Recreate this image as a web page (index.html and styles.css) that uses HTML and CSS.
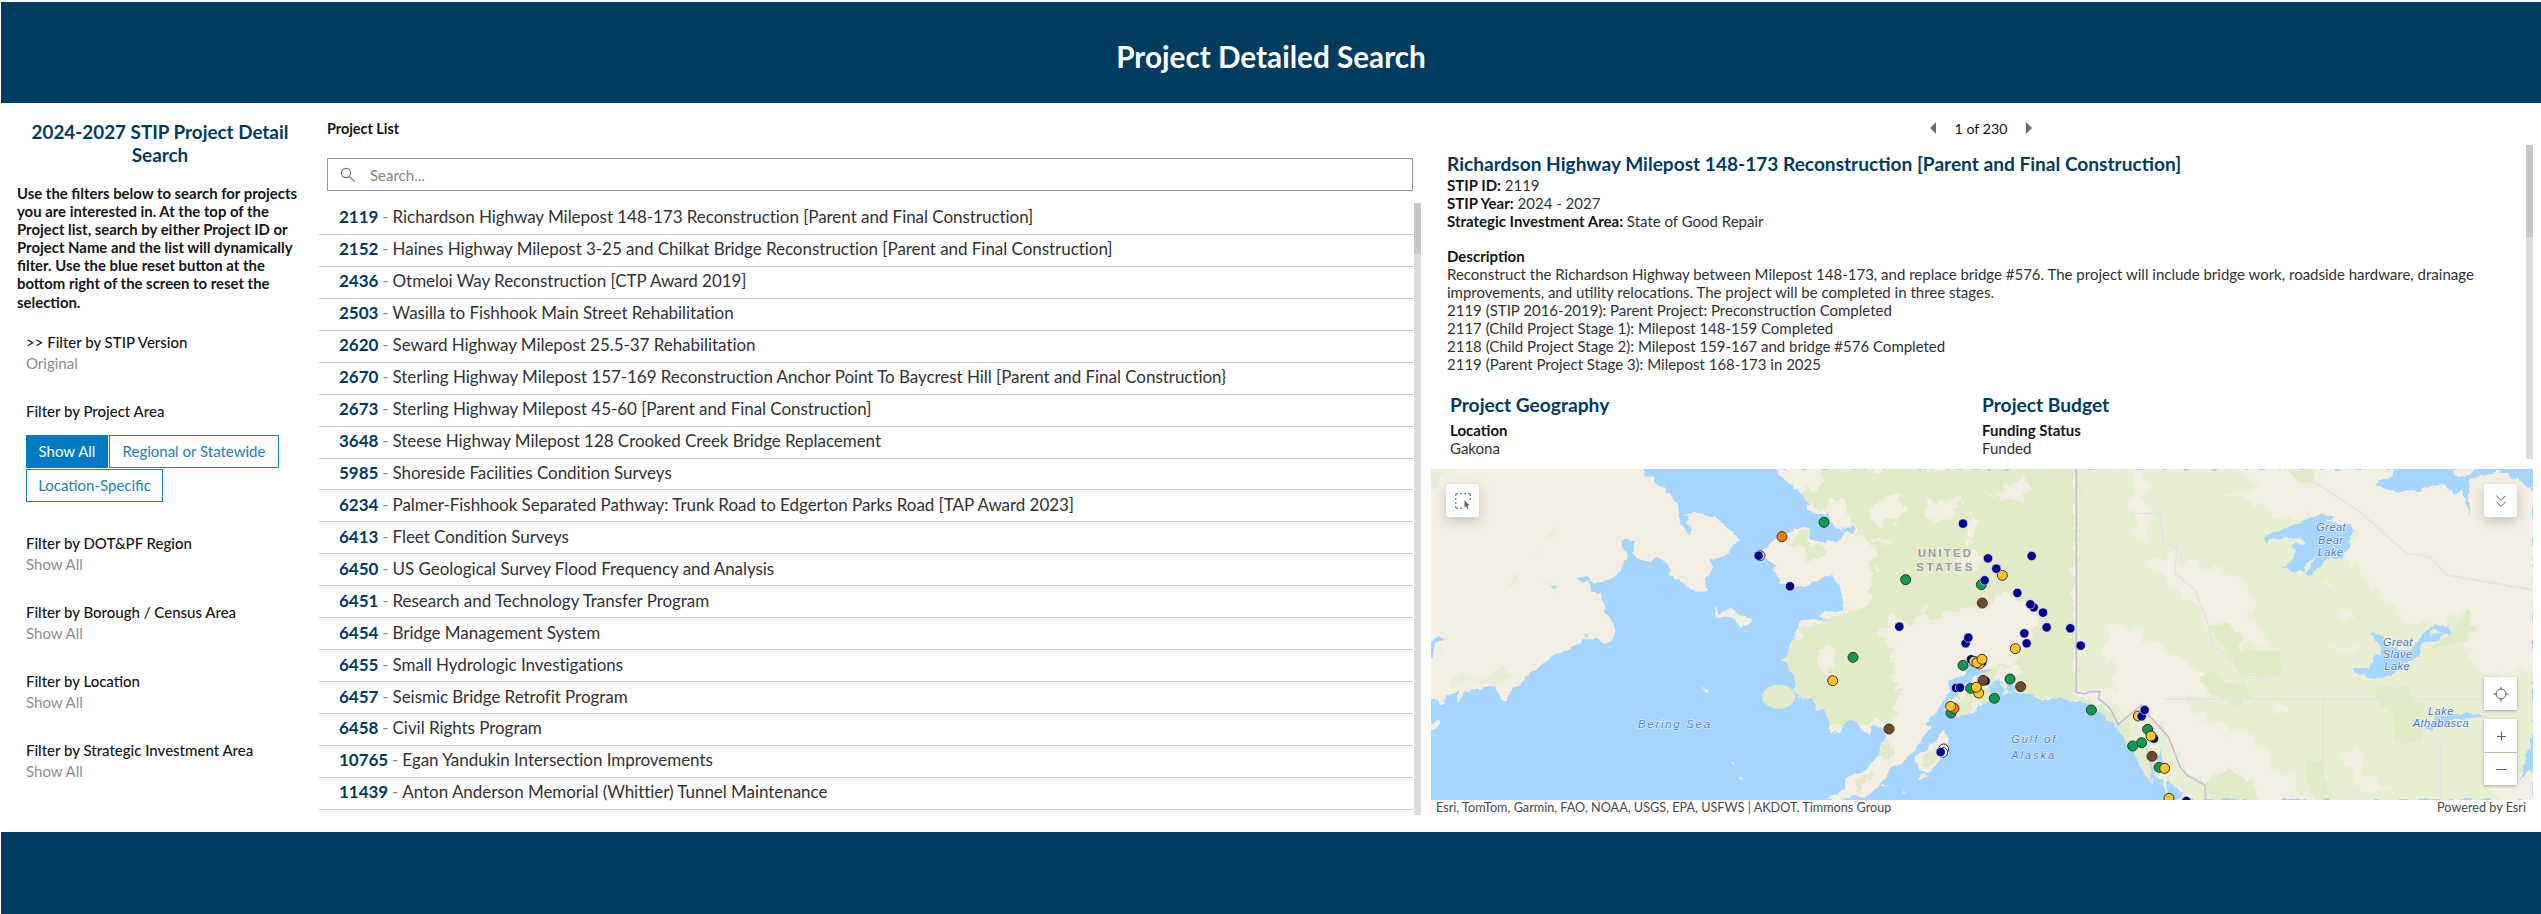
FILE: index.html
```html
<!DOCTYPE html>
<html lang="en">
<head>
<meta charset="utf-8">
<title>Project Detailed Search</title>
<link rel="stylesheet" href="styles.css">
</head>
<body>
<div class="app">
  <header class="banner"><h1 class="banner-title">Project Detailed Search</h1></header>
  <main class="main">
    <aside class="sidebar">
      <h2 class="side-title">2024-2027 STIP Project Detail<br>Search</h2>
      <p class="side-text">Use the filters below to search for projects<br>you are interested in. At the top of the<br>Project list, search by either Project ID or<br>Project Name and the list will dynamically<br>filter. Use the blue reset button at the<br>bottom right of the screen to reset the<br>selection.</p>
      <div class="filters">
        <div class="filter"><div class="filter-name">&gt;&gt; Filter by STIP Version</div><div class="filter-value">Original</div></div>
        <div class="filter filter-area"><div class="filter-name">Filter by Project Area</div>
          <div class="choices"><button class="choice choice-on">Show All</button><button class="choice choice-wide">Regional or Statewide</button><button class="choice choice-loc">Location-Specific</button></div></div>
        <div class="filter"><div class="filter-name">Filter by DOT&amp;PF Region</div><div class="filter-value">Show All</div></div>
        <div class="filter"><div class="filter-name">Filter by Borough / Census Area</div><div class="filter-value">Show All</div></div>
        <div class="filter"><div class="filter-name">Filter by Location</div><div class="filter-value">Show All</div></div>
        <div class="filter"><div class="filter-name">Filter by Strategic Investment Area</div><div class="filter-value">Show All</div></div>
      </div>
    </aside>

    <section class="list-panel">
      <h3 class="list-title">Project List</h3>
      <div class="search">
        <svg class="search-icon" viewBox="0 0 16 16"><circle cx="6" cy="6" r="4.6"/><path d="M9.3 9.3 14.6 14.6"/></svg>
        <span>Search...</span>
      </div>
      <div class="list-body">
        <ul class="rows">
          <li class="row"><b>2119</b><i>-</i><span>Richardson Highway Milepost 148-173 Reconstruction [Parent and Final Construction]</span></li>
          <li class="row"><b>2152</b><i>-</i><span>Haines Highway Milepost 3-25 and Chilkat Bridge Reconstruction [Parent and Final Construction]</span></li>
          <li class="row"><b>2436</b><i>-</i><span>Otmeloi Way Reconstruction [CTP Award 2019]</span></li>
          <li class="row"><b>2503</b><i>-</i><span>Wasilla to Fishhook Main Street Rehabilitation</span></li>
          <li class="row"><b>2620</b><i>-</i><span>Seward Highway Milepost 25.5-37 Rehabilitation</span></li>
          <li class="row"><b>2670</b><i>-</i><span>Sterling Highway Milepost 157-169 Reconstruction Anchor Point To Baycrest Hill [Parent and Final Construction}</span></li>
          <li class="row"><b>2673</b><i>-</i><span>Sterling Highway Milepost 45-60 [Parent and Final Construction]</span></li>
          <li class="row"><b>3648</b><i>-</i><span>Steese Highway Milepost 128 Crooked Creek Bridge Replacement</span></li>
          <li class="row"><b>5985</b><i>-</i><span>Shoreside Facilities Condition Surveys</span></li>
          <li class="row"><b>6234</b><i>-</i><span>Palmer-Fishhook Separated Pathway: Trunk Road to Edgerton Parks Road [TAP Award 2023]</span></li>
          <li class="row"><b>6413</b><i>-</i><span>Fleet Condition Surveys</span></li>
          <li class="row"><b>6450</b><i>-</i><span>US Geological Survey Flood Frequency and Analysis</span></li>
          <li class="row"><b>6451</b><i>-</i><span>Research and Technology Transfer Program</span></li>
          <li class="row"><b>6454</b><i>-</i><span>Bridge Management System</span></li>
          <li class="row"><b>6455</b><i>-</i><span>Small Hydrologic Investigations</span></li>
          <li class="row"><b>6457</b><i>-</i><span>Seismic Bridge Retrofit Program</span></li>
          <li class="row"><b>6458</b><i>-</i><span>Civil Rights Program</span></li>
          <li class="row"><b>10765</b><i>-</i><span>Egan Yandukin Intersection Improvements</span></li>
          <li class="row"><b>11439</b><i>-</i><span>Anton Anderson Memorial (Whittier) Tunnel Maintenance</span></li>
        </ul>
        <div class="scroll scroll-list"><div class="thumb thumb-list"></div></div>
      </div>
    </section>

    <section class="detail">
      <div class="pager">
        <svg class="arrow" viewBox="0 0 6 12"><path d="M6 0V12L0 6Z"/></svg>
        <span class="pager-text">1 of 230</span>
        <svg class="arrow" viewBox="0 0 6 12"><path d="M0 0V12L6 6Z"/></svg>
      </div>
      <div class="info">
        <div class="info-body">
          <h2 class="project-name">Richardson Highway Milepost 148-173 Reconstruction [Parent and Final Construction]</h2>
          <p class="line"><b>STIP ID:</b> 2119</p>
          <p class="line"><b>STIP Year:</b> 2024 - 2027</p>
          <p class="line"><b>Strategic Investment Area:</b> State of Good Repair</p>
          <p class="line line-head"><b>Description</b></p>
          <p class="line">Reconstruct the Richardson Highway between Milepost 148-173, and replace bridge #576. The project will include bridge work, roadside hardware, drainage</p>
          <p class="line">improvements, and utility relocations. The project will be completed in three stages.</p>
          <p class="line">2119 (STIP 2016-2019): Parent Project: Preconstruction Completed</p>
          <p class="line">2117 (Child Project Stage 1): Milepost 148-159 Completed</p>
          <p class="line">2118 (Child Project Stage 2): Milepost 159-167 and bridge #576 Completed</p>
          <p class="line">2119 (Parent Project Stage 3): Milepost 168-173 in 2025</p>
          <div class="facts">
            <div class="fact"><h3 class="fact-title">Project Geography</h3><p class="line"><b>Location</b></p><p class="line">Gakona</p></div>
            <div class="fact"><h3 class="fact-title">Project Budget</h3><p class="line"><b>Funding Status</b></p><p class="line">Funded</p></div>
          </div>
        </div>
        <div class="scroll scroll-info"><div class="thumb thumb-info"></div></div>
      </div>

      <div class="map">
        <svg class="map-art" viewBox="33 27 3306 993" preserveAspectRatio="none">
          <defs>
            <filter id="rough" x="-5%" y="-5%" width="110%" height="110%"><feTurbulence type="fractalNoise" baseFrequency="0.035" numOctaves="4" seed="4"/><feDisplacementMap in="SourceGraphic" scale="22" xChannelSelector="R" yChannelSelector="G"/></filter>
            <filter id="rougher" x="-5%" y="-5%" width="110%" height="110%"><feTurbulence type="fractalNoise" baseFrequency="0.02" numOctaves="5" seed="9"/><feDisplacementMap in="SourceGraphic" scale="80" xChannelSelector="R" yChannelSelector="G"/></filter>
            <clipPath id="mainland"><path id="coast" d="M1075 27L1080 45L1120 80L1155 110L1170 155L1225 165L1232 180L1240 200L1262 208L1275 222L1258 243L1200 243L1165 238L1168 200L1140 205L1080 225L1065 235L1040 262L1020 285L1035 303L1075 312L1060 328L1075 350L1078 370L1110 380L1140 378L1150 385L1165 375L1210 350L1235 345L1255 370L1270 420L1265 452L1220 455L1198 462L1215 480L1190 478L1140 480L1133 515L1105 562L1098 585L1085 600L1105 620L1112 640L1130 660L1120 690L1145 715L1175 715L1190 750L1210 745L1230 790L1225 815L1260 820L1280 780L1295 775L1315 795L1345 828L1362 795L1400 812L1385 855L1380 885L1330 930L1280 958L1275 990L1215 1020L1265 1020L1300 1005L1335 1010L1380 980L1410 930L1480 880L1510 830L1535 800L1512 795L1560 740L1590 700L1585 665L1640 635L1650 605L1672 632L1725 625L1665 650L1612 690L1605 710L1575 738L1582 765L1612 770L1660 755L1690 735L1715 712L1705 680L1740 660L1760 690L1745 710L1780 690L1800 700L1830 702L1865 722L1905 712L1955 722L2020 742L2080 790L2115 840L2145 875L2165 930L2195 975L2200 940L2225 960L2245 1020L3339 1020V27Z"/></clipPath>
          </defs>
          <rect class="sea" x="33" y="27" width="3306" height="993"/>
          <g filter="url(#rough)" class="soil">
            <path d="M0 0H660L672 42L700 55L712 70L740 90L752 105L775 125L780 150L776 170L790 195L795 215L812 220L805 200L806 165L785 160L830 155L850 165L890 170L905 190L945 225L960 243L935 260L922 285L870 298L873 330L858 350L850 365L868 385L850 398L832 397L805 390L785 365L750 345L742 305L710 290L690 302L652 297L636 260L650 222L645 238L608 244L608 265L622 290L605 330L580 355L545 367L510 365L512 388L530 402L540 395L552 425L558 460L578 490L581 520L568 553L510 535L490 540L440 570L400 592L375 605L345 630L310 660L275 685L262 725L250 720L225 682L190 680L140 695L110 735L112 692L78 710L74 732L62 735L50 718L0 725Z"/>
            <path d="M0 790L45 785L55 775L60 797L33 808L0 815Z"/>
            <path d="M885 440L900 458L935 445L960 465L995 475L990 485L972 490L962 502L945 482L920 470L887 472Z"/>
            <path d="M840 678L853 688L870 693L868 698L855 696Z"/>
            <path d="M1570 812L1585 845L1580 880L1555 912L1525 935L1500 930L1485 890L1520 870L1550 840Z"/>
            <path d="M1490 950L1515 940L1520 950L1492 957Z"/>
            <path d="M935 909h10v5h-10zM958 948h12v5h-12zM1390 975l10 8-8 2zM1453 990l5 8h-5z"/>
          </g>
          <g filter="url(#rough)" class="park2"><path d="M385 215L405 200L402 230L375 238ZM340 300L360 265L352 290ZM255 390L285 345L300 345L275 385ZM370 365L395 360L412 390L405 415L398 390ZM82 690L100 655L130 635L170 655L205 655L250 615L265 640L290 650L250 665L235 680L200 665L140 665L110 675ZM33 27H90L60 50L45 90H33ZM50 565L70 560L65 580Z"/></g>
          <path class="park" filter="url(#rough)" d="M1505 890L1530 875L1555 855L1560 890L1525 925L1505 915Z"/>
          <path class="sea" d="M33 545L55 527L75 540L45 547L38 595H33ZM468 355L500 348L512 358L488 368ZM390 380L412 376L402 388ZM492 518L500 524L508 518L502 532H496Z"/>
          <ellipse class="park" cx="1076" cy="710" rx="49" ry="36"/>
          <g filter="url(#rough)">
            <use href="#coast" class="soil"/>
            <g clip-path="url(#mainland)">
              <path class="field" d="M1969 27H3339V1020H2330L2190 930L2080 800L1969 700Z"/>
              <g filter="url(#rougher)">
                <path class="park" d="M1210 20H1969V700L2040 740L2150 840L2250 1020L2200 1020L2080 800L1960 730L1860 725L1780 700L1700 740L1590 770L1600 720L1680 650L1700 620L1780 610L1830 540L1850 480L1840 440L1740 400L1700 450L1640 440L1600 470L1480 450L1400 540L1430 640L1440 740L1400 790L1270 800L1180 740L1080 680V590L1140 540L1150 500L1260 470L1330 440L1370 350L1350 240L1290 190L1280 110L1170 150L1160 100L1220 80Z"/>
                <path class="park" d="M1140 210L1170 200L1180 250L1200 260L1200 310L1160 310L1150 260L1070 260ZM1500 860L1580 870L1540 930L1500 920ZM1300 980L1360 930L1340 990ZM1380 830L1430 870L1390 900Z"/>
                <path class="soil" d="M1370 120L1440 110L1465 140L1440 180L1380 195L1350 160ZM1520 130L1600 110L1640 125L1600 170L1530 190ZM1690 90L1740 95L1790 60L1830 80L1820 120L1740 130ZM1590 300L1650 270L1700 290L1650 320ZM1380 510L1440 480L1480 540L1410 580ZM1740 620L1800 630L1780 660L1730 650ZM1360 240L1400 220L1420 250L1380 260ZM1640 200L1660 150L1670 240L1640 260ZM1180 580L1240 570L1250 630L1200 640Z"/>
                <path class="soil" d="M2130 20H2175L2170 110L2190 160L2170 250L2140 200ZM2440 20H3400V640H3260L3240 650L3160 620L3130 560L3150 470L3080 480L2960 480L2920 430L2860 390L2790 300L2800 210L2740 190L2660 170L2580 180L2520 150L2420 100L2530 80ZM2160 310L2260 290L2340 310L2420 330L2490 380L2500 470L2545 560L2450 560L2420 500L2360 500L2310 430L2250 370ZM2070 490L2150 520L2280 590L2360 650L2440 660L2400 720L2300 710L2360 780L2490 830L2580 920L2680 1030H2370L2350 970L2280 920L2240 830L2190 770L2080 740L1950 710V690H2100L2060 600ZM2755 440L2790 450L2800 500L2770 500ZM2720 370L2740 360L2750 390L2730 400ZM2700 550L2760 560L2830 570L2800 590ZM2770 860L2830 850L2840 950L2920 990L2820 1000ZM3210 970L3270 920L3350 960V1030H3230ZM2550 740L2600 730L2620 760L2570 760Z"/>
                <path class="park" d="M2340 650L2400 650L2460 670L2480 700L2440 730L2370 700ZM2360 980L2420 920L2480 960L2560 1020H2360ZM2650 890L2700 880L2720 1020H2690Z"/>
              </g>
              <path class="park" d="M2370 500L2425 490L2470 530L2460 570L2580 575L2582 650L2470 652L2430 590ZM2865 682H2960L2985 722H3010V848H2922V760L2865 725ZM3030 560L3090 520L3120 490L3135 450L3150 450V490L3178 510L3145 520L3140 545L3080 560ZM2600 27H2683V68H2640Z"/>
            </g>
            <path class="sea" d="M2530 228L2550 225L2600 205L2660 180L2715 157L2745 172L2720 180L2760 195L2792 190L2797 210L2785 240L2788 270L2765 290L2720 300L2690 330L2665 350L2657 340L2690 285L2660 305L2650 340L2587 320L2610 310L2630 270L2615 250L2655 252L2650 240L2600 232L2550 240L2538 255Z"/>
            <path class="sea" d="M2847 513L2875 520L2895 550L2940 570L2975 570L3010 520L3040 498L3080 500L3100 515L3085 522L3040 510L3025 524L3070 520L3055 540L3010 548L2995 590L2940 620L2905 650L2860 658L2810 640L2792 623L2850 625L2865 590L2885 588L2880 550Z"/>
            <path class="sea" d="M3018 800L3040 780L3060 765L3110 765L3140 752L3160 762L3205 768L3140 775L3060 790L3030 820Z"/>
            <path class="sea" d="M2870 75L2890 55L2922 50V10H3100V50L3145 50L3170 10H3350V88L3280 55L3230 30L3150 60L3145 110L3150 165L3135 120L3130 90L3100 100L3065 70L3000 92L2930 97Z"/>
            <path class="sea" d="M3350 840L3315 890L3310 930L3295 965L3350 915ZM1760 665L1785 680L1770 695ZM1720 690L1740 680L1735 710ZM2215 870L2235 920L2210 900ZM2240 960L2290 1000L2270 1020H2245ZM1262 200L1305 200L1300 215L1270 212ZM2180 850L2200 950L2190 960Z"/>
          </g>
          <path class="province" d="M2235 717H3200M2710 717V1020M3063 850V1020M2130 160H2220L2230 250L2270 260L2265 340L2325 390L2360 480L2380 560L2440 600L2470 655H2550M2685 68L2820 155L2960 280L3030 290L3080 345L3339 390"/>
          <path class="border" d="M1969 27V697L1995 702L2010 695H2040L2035 715L2070 745L2095 793L2140 755L2165 735L2190 770L2245 830L2280 920L2300 945L2355 975L2357 1020"/>
          <g class="label-sea"><text x="654" y="804" textLength="216" font-size="34">Bering Sea</text><text x="1774" y="850" textLength="132" font-size="33">Gulf of</text><text x="1774" y="897" textLength="128" font-size="33">Alaska</text></g>
          <g class="label-lake"><text x="2689" y="214" textLength="88">Great</text><text x="2694" y="251" textLength="75">Bear</text><text x="2693" y="288" textLength="76">Lake</text><text x="2889" y="557" textLength="88">Great</text><text x="2888" y="594" textLength="88">Slave</text><text x="2893" y="631" textLength="76">Lake</text><text x="3024" y="765" textLength="76">Lake</text><text x="2978" y="802" textLength="168">Athabasca</text></g>
          <g class="label-country"><text x="1493" y="291" textLength="160">UNITED</text><text x="1489" y="332" textLength="168">STATES</text></g>
          <g id="pins"></g>
        </svg>
        <div class="tool tool-select"><svg viewBox="0 0 16 16"><path d="M.8 3V.8H3M5 .8h2M9 .8h2M13 .8h2.2V3M.8 5v2M.8 9v2M.8 13v2.2H3M5 15.2h2M15.2 5v2"/><path class="solid" d="M9.5 7.5v7l1.6-1.4 1 2.4 1.3-.6-1-2.3h2.2z"/></svg></div>
        <div class="tool tool-layers"><svg viewBox="0 0 16 16"><path d="M3.4 2.8 8 7.4 12.6 2.8M3.4 8.8 8 13.4 12.6 8.8"/></svg></div>
        <div class="tool tool-locate"><svg viewBox="0 0 16 16"><circle cx="8" cy="8" r="5"/><path d="M8 .5V3.4M8 12.6V15.5M.5 8H3.4M12.6 8H15.5"/></svg></div>
        <div class="tool tool-in"><svg viewBox="0 0 16 16"><path d="M8.5 3.5V12.5M4 8.5H13"/></svg></div>
        <div class="tool tool-out"><svg viewBox="0 0 16 16"><path d="M3 8.5H13.5"/></svg></div>
      </div>
      <div class="credits"><span>Esri, TomTom, Garmin, FAO, NOAA, USGS, EPA, USFWS | AKDOT, Timmons Group</span><span>Powered by Esri</span></div>
    </section>
  </main>
  <footer class="footer"></footer>
</div>
<script src="map.js"></script>
</body>
</html>
```
FILE: styles.css
```css
* { box-sizing: border-box; margin: 0; padding: 0; }
body { background: #fff; font-family: Lato, "Open Sans", sans-serif; color: #151515; overflow: hidden; }
.app { width: 2541px; height: 914px; padding: 2px 0 0 1px; display: flex; flex-direction: column; }
.banner { height: 101px; background: #003c5f; display: flex; justify-content: center; align-items: center; padding-top: 9px; flex: none; }
.banner-title { color: #fff; font-size: 29.7px; font-weight: 700; line-height: 34px; white-space: nowrap; }
.main { display: flex; height: 729px; flex: none; }
.footer { flex: 1; background: #003c5f; }

.sidebar { width: 318px; padding-top: 17px; flex: none; }
.side-title { color: #003c5f; font-size: 18.85px; font-weight: 700; line-height: 23px; text-align: center; white-space: nowrap; }
.side-text { margin: 18px 0 0 16px; font-size: 14.9px; font-weight: 700; line-height: 18.1px; white-space: nowrap; }
.filters { padding: 20px 0 0 25px; }
.filter { height: 69px; }
.filter-area { height: 132px; }
.filter-name { font-size: 15px; font-weight: 500; line-height: 22px; white-space: nowrap; }
.filter-value { font-size: 15px; line-height: 21px; color: #8e8e8e; }
.choices { display: flex; flex-wrap: wrap; gap: 1px; margin-top: 13px; width: 260px; }
.choice { font: 400 15px/20px Lato, sans-serif; height: 33px; border: 1px solid #1f7fb8; background: #fff; color: #2580b4; width: 82px; white-space: nowrap; }
.choice-on { background: #007ac2; color: #fff; border-color: #007ac2; }
.choice-wide { width: 170px; }
.choice-loc { width: 137px; }

.list-panel { width: 1103px; flex: none; }
.list-title { font-size: 14.4px; font-weight: 700; line-height: 20px; padding: 16px 0 0 8px; }
.search { margin: 19px 0 0 8px; width: 1086px; height: 33px; border: 1px solid #949494; display: flex; align-items: center; padding-left: 12px; gap: 14px; font-size: 15px; color: #858585; }
.search-icon { width: 16px; height: 16px; fill: none; stroke: #6e6e6e; stroke-width: 1.1; }
.list-body { display: flex; margin-top: 12px; height: 612px; gap: 1px; }
.rows { list-style: none; width: 1094px; }
.row { height: 31.95px; border-bottom: 1px solid #cacaca; padding: 0 0 3px 20px; display: flex; align-items: center; font-size: 17px; letter-spacing: -.045px; white-space: nowrap; color: #323232; }
.row b { color: #003c5f; font-weight: 700; }
.row i { font-style: normal; color: #8c8c8c; margin: 0 4px 0 4px; }
.scroll { background: #dedede; flex: none; }
.thumb { background: #c8c8c8; }
.scroll-list { width: 7px; }
.thumb-list { height: 51px; }

.detail { flex: 1; padding-left: 8px; }
.pager { height: 42px; display: flex; align-items: center; justify-content: center; gap: 18px; padding: 8px 9px 0 0; }
.pager-text { font-size: 14.2px; width: 54px; text-align: center; white-space: nowrap; }
.arrow { width: 6px; height: 12px; fill: #6a6a6a; }
.info { display: flex; justify-content: space-between; height: 314px; width: 1103px; }
.info-body { padding: 7px 0 0 17px; overflow: hidden; white-space: nowrap; }
.project-name { color: #003c5f; font-size: 19.1px; font-weight: 700; line-height: 24px; }
.line { font-size: 15px; line-height: 18px; color: #323232; }
.line b { color: #151515; }
.line-head { margin-top: 17px; }
.scroll-info { width: 7px; }
.thumb-info { height: 92px; }
.facts { display: flex; padding: 18px 0 0 3px; }
.fact { width: 532px; }
.fact-title { color: #003c5f; font-size: 19.2px; font-weight: 700; line-height: 28px; margin-bottom: 2px; }

.map { position: relative; margin: 10px 0 0 1px; width: 1102px; height: 331px; overflow: hidden; }
.map-art { display: block; width: 1102px; height: 331px; }
.sea { fill: #a6d6ff; }
.soil { fill: #f3efe3; }
.park { fill: #e1ebc8; }
.park2 { fill: #ebeed6; }
.field { fill: #e8efd3; }
.province { fill: none; stroke: #e3e2e8; stroke-width: 4; }
.border { fill: none; stroke: #c6bedb; stroke-width: 5; }
.label-sea text, .label-lake text { font-family: "Liberation Sans", Arial, sans-serif; font-style: italic; fill: #6084ba; stroke: #d7ebff; stroke-width: 4; paint-order: stroke; }
.label-lake text { font-size: 33px; fill: #5278c0; stroke: #eaf4fc; }
.label-country text { font-family: "Liberation Sans", Arial, sans-serif; font-weight: 700; font-size: 34px; fill: #a09ba0; stroke: #eef0dc; stroke-width: 4; paint-order: stroke; }
.pin { stroke: #333; stroke-width: 3; }
.pin-navy { fill: #00008b; stroke: #e8eaf5; stroke-width: 2; }
.pin-green { fill: #0a9c50; }
.pin-gold { fill: #fdc32c; }
.pin-brown { fill: #70492b; }
.pin-orange { fill: #ff7800; }
.pin-white { fill: #f4f4f4; }
.tool { position: absolute; width: 33px; height: 33px; background: #fff; display: flex; align-items: center; justify-content: center; box-shadow: 0 1px 3px rgba(0, 0, 0, .3); }
.tool svg { width: 16px; height: 16px; fill: none; stroke: #5f5f5f; stroke-width: 1; }
.tool svg .solid { fill: #5f5f5f; stroke: none; }
.tool-select, .tool-layers { top: 15px; border-radius: 3px; box-shadow: 0 4px 12px rgba(0, 0, 0, .18); }
.tool-select { left: 15px; }
.tool-layers { right: 16px; }
.tool-locate { right: 16px; top: 208px; }
.tool-in { right: 16px; top: 250px; }
.tool-out { right: 16px; top: 284px; height: 32px; }
.credits { display: flex; justify-content: space-between; width: 1096px; padding-left: 6px; font-size: 12.67px; line-height: 15px; color: #4a4a4a; white-space: nowrap; }
```
FILE: map.js
```js
// Project pins: colour, x, y in map units
const pins = [
  ["white",1020,287],["navy",1016,287],["navy",1110,379],["orange",1086,230],["green",1212,187],["green",1457,359],["green",1299,592],["gold",1238,662],
  ["navy",1438,500],["navy",1629,191],["navy",1704,295],["navy",1835,288],["gold",1747,346],["navy",1729,326],["green",1684,374],["navy",1694,361],
  ["brown",1687,429],["navy",1792,399],["navy",1841,442],["navy",1831,433],["navy",1869,458],["navy",1880,502],["navy",1951,505],["navy",1982,557],
  ["navy",1813,520],["navy",1820,550],["gold",1786,566],["navy",1637,550],["navy",1645,533],["navy",1653,598],["navy",1686,608],["gold",1662,604],["gold",1678,612],["gold",1671,608],["gold",1686,598],["green",1629,616],
  ["navy",1697,663],["brown",1689,661],["navy",1608,684],["navy",1620,683],["green",1652,685],["gold",1676,699],["gold",1669,682],["green",1723,715],["green",1770,657],["brown",1802,680],
  ["green",1593,759],["orange",1602,745],["gold",1592,739],["brown",1407,807],["white",1571,867],["white",1568,877],["navy",1562,876],
  ["green",2014,750],["gold",2155,768],["navy",2165,769],["navy",2174,750],["navy",2202,836],["green",2183,808],["gold",2193,828],["green",2165,848],["green",2138,858],["brown",2196,889],["green",2217,922],["gold",2234,925],["gold",2247,1015],["navy",2299,1023]
];
const layer = document.getElementById("pins");
for (const [kind, x, y] of pins) {
  const c = document.createElementNS("http://www.w3.org/2000/svg", "circle");
  c.setAttribute("class", "pin pin-" + kind);
  c.setAttribute("cx", x);
  c.setAttribute("cy", y);
  c.setAttribute("r", kind === "navy" ? 14 : 15);
  layer.appendChild(c);
}
```
